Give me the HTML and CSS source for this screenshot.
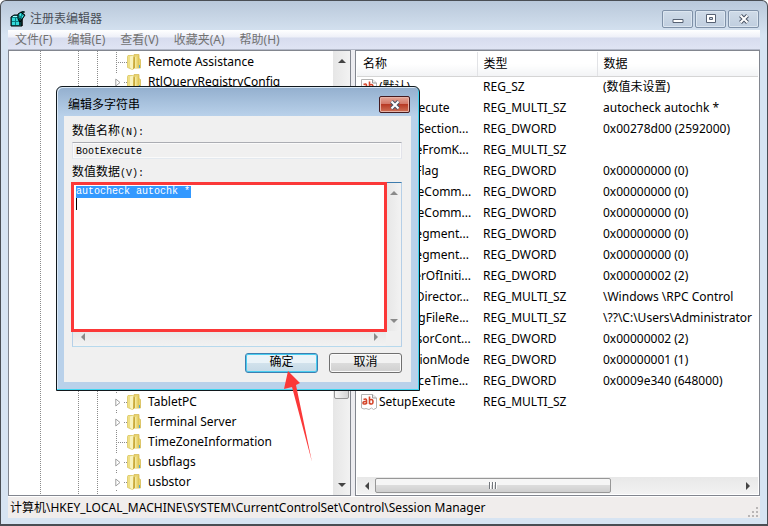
FILE: index.html
```html
<!DOCTYPE html>
<html lang="zh-CN">
<head>
<meta charset="utf-8">
<title>注册表编辑器</title>
<link rel="stylesheet" href="styles.css">
</head>
<body>
<svg class="defs" aria-hidden="true">
  <defs>
    <linearGradient id="gold" x1="0" x2="1"><stop offset="0" stop-color="#f7efa8"/><stop offset="1" stop-color="#dcc04e"/></linearGradient>
    <symbol id="folder" viewBox="0 0 14 16">
      <path d="M1 1.500h5.500v13l-1 1L.5 13.500v-11z" fill="#efdf86" stroke="#dac660" stroke-width=".8"/>
      <path d="M7 .5h5v4l1.500 1v8.500H7z" fill="#e9d370" stroke="#d5bd58" stroke-width=".8"/>
      <path d="M3 2.500l3.500-1v13L5 15.500l-2-2z" fill="#f9f3bf"/>
      <path d="M6.500 2.500l1.500 1v10l-2 2z" fill="#c9a93b"/>
      <path d="M8 3l4-1.500v12l-4 1z" fill="url(#gold)"/>
      <path d="M12.500 11v3" stroke="#58aacb"/>
    </symbol>
    <symbol id="twist" viewBox="0 0 6 9"><path d="M.8 1v7L5 4.500z" fill="#fff" stroke="#a0a0a0"/></symbol>
    <symbol id="string" viewBox="0 0 16 16">
      <path d="M.5.5h11l4 3.500v10l-3 1.500-2-1.500-2.500 1.500-3-1-2 .5-2.500-1z" fill="#fff" stroke="#b4b4b4"/>
      <path d="M11.500.5V4h4" fill="#eee" stroke="#999"/>
      <path d="M2.500 5.500q3-1.200 3 .7V10M5.500 7.500Q2 7.200 2 9t3.500.4M8.500 2.500V10M8.500 6q3.500-1.500 3.500 1.800T8.500 9.500" fill="none" stroke="#d4452a" stroke-width="1.600"/>
    </symbol>
    <symbol id="cross" viewBox="0 0 12 10"><path d="M2.500 1.500l7 7M9.500 1.500l-7 7" stroke="#4b5566" stroke-width="4"/><path d="M2.500 1.500l7 7M9.500 1.500l-7 7" stroke="#fff" stroke-width="2"/></symbol>
    <symbol id="left" viewBox="0 0 6 8"><path d="M5 0v8L1 4z" fill="currentColor"/></symbol>
    <symbol id="right" viewBox="0 0 6 8"><path d="M1 0v8l4-4z" fill="currentColor"/></symbol>
    <symbol id="up" viewBox="0 0 8 6"><path d="M0 5h8L4 1z" fill="currentColor"/></symbol>
    <symbol id="down" viewBox="0 0 8 6"><path d="M0 1h8L4 5z" fill="currentColor"/></symbol>
  </defs>
</svg>
<div class="window">
  <header class="titlebar">
    <svg class="app-icon" viewBox="0 0 16 16">
      <path d="M1 6l3-2h7l1 3v8H1z" fill="#087c80" stroke="#000"/>
      <path d="M2 7h3v3H2zM6 7h2v3H6zM2 11h3v3H2zM6 11h3v3H6z" fill="#32dada"/>
      <path d="M3 5h5l-1 1H3z" fill="#a7ffff"/>
      <path d="M8 3l3-2 2 2 2 1-2 3-3 4-2-3z" fill="#0a8b8f" stroke="#000"/>
      <path d="M9 4l2-2v3zM12 5l2-1-2 3z" fill="#51f5f5"/>
      <path d="M12 0h2v2h-2zM12 8v7M10 7v7" stroke="#000" fill="#24cccc"/>
    </svg>
    <h1>注册表编辑器</h1>
    <div class="caption-buttons">
      <button aria-label="最小化"><svg viewBox="0 0 12 10"><path d="M1 5.500h10v3H1z" fill="#fff" stroke="#566173"/></svg></button>
      <button aria-label="最大化"><svg viewBox="0 0 12 10"><path d="M1.500.5h9v8h-9z" fill="#fff" stroke="#566173"/><path d="M4.500 3.500h3v2h-3z" fill="#cbd6e4" stroke="#566173"/></svg></button>
      <button aria-label="关闭"><svg><use href="#cross"/></svg></button>
    </div>
  </header>
  <nav class="menu">
    <button>文件(F)</button><button>编辑(E)</button><button>查看(V)</button><button>收藏夹(A)</button><button>帮助(H)</button>
  </nav>
  <main class="panes">
    <section class="pane tree-pane">
      <ul class="tree">
        <li class="leaf"><svg class="folder"><use href="#folder"/></svg>Remote Assistance</li>
        <li><svg class="twist"><use href="#twist"/></svg><svg class="folder"><use href="#folder"/></svg>RtlQueryRegistryConfig</li>
        <li class="covered"></li>
        <li><svg class="twist"><use href="#twist"/></svg><svg class="folder"><use href="#folder"/></svg>TabletPC</li>
        <li><svg class="twist"><use href="#twist"/></svg><svg class="folder"><use href="#folder"/></svg>Terminal Server</li>
        <li class="leaf"><svg class="folder"><use href="#folder"/></svg>TimeZoneInformation</li>
        <li><svg class="twist"><use href="#twist"/></svg><svg class="folder"><use href="#folder"/></svg>usbflags</li>
        <li><svg class="twist"><use href="#twist"/></svg><svg class="folder"><use href="#folder"/></svg>usbstor</li>
      </ul>
      <div class="vscroll tree-scroll"><svg class="arrow-v"><use href="#up"/></svg><div class="vthumb"></div><svg class="arrow-v end"><use href="#down"/></svg></div>
    </section>
    <section class="pane list-pane">
      <div class="list">
      <table>
        <thead><tr><th class="col">名称</th><th class="col">类型</th><th>数据</th></tr></thead>
        <tbody>
          <tr><td><svg><use href="#string"/></svg>(默认)</td><td>REG_SZ</td><td>(数值未设置)</td></tr>
          <tr><td class="plain">BootExecute</td><td>REG_MULTI_SZ</td><td>autocheck autochk *</td></tr>
          <tr><td class="plain">CriticalSection...</td><td>REG_DWORD</td><td>0x00278d00 (2592000)</td></tr>
          <tr><td class="plain">ExcludeFromK...</td><td>REG_MULTI_SZ</td><td></td></tr>
          <tr><td class="plain">GlobalFlag</td><td>REG_DWORD</td><td>0x00000000 (0)</td></tr>
          <tr><td class="plain">HeapDeComm...</td><td>REG_DWORD</td><td>0x00000000 (0)</td></tr>
          <tr><td class="plain">HeapDeComm...</td><td>REG_DWORD</td><td>0x00000000 (0)</td></tr>
          <tr><td class="plain">HeapSegment...</td><td>REG_DWORD</td><td>0x00000000 (0)</td></tr>
          <tr><td class="plain">HeapSegment...</td><td>REG_DWORD</td><td>0x00000000 (0)</td></tr>
          <tr><td class="plain">NumberOfIniti...</td><td>REG_DWORD</td><td>0x00000002 (2)</td></tr>
          <tr><td class="plain">ObjectDirector...</td><td>REG_MULTI_SZ</td><td>\Windows \RPC Control</td></tr>
          <tr><td class="plain">PendingFileRe...</td><td>REG_MULTI_SZ</td><td>\??\C:\Users\Administrator</td></tr>
          <tr><td class="plain">ProcessorCont...</td><td>REG_DWORD</td><td>0x00000002 (2)</td></tr>
          <tr><td class="plain">ProtectionMode</td><td>REG_DWORD</td><td>0x00000001 (1)</td></tr>
          <tr><td class="plain">ResourceTime...</td><td>REG_DWORD</td><td>0x0009e340 (648000)</td></tr>
          <tr><td><svg><use href="#string"/></svg>SetupExecute</td><td>REG_MULTI_SZ</td><td></td></tr>
        </tbody>
      </table>
      </div>
      <div class="hscroll"><svg class="arrow-h"><use href="#left"/></svg><div class="hthumb"><i></i><i></i><i></i></div><svg class="arrow-h end"><use href="#right"/></svg></div>
    </section>
  </main>
  <footer class="status">计算机\HKEY_LOCAL_MACHINE\SYSTEM\CurrentControlSet\Control\Session Manager
    <svg class="grip" viewBox="0 0 10 10"><path d="M8 0h2v2H8zM4 4h2v2H4zM8 4h2v2H8zM0 8h2v2H0zM4 8h2v2H4zM8 8h2v2H8z" fill="#b9b6b6"/></svg>
  </footer>
</div>

<div class="dialog" role="dialog" aria-labelledby="dialog-title">
  <div class="dialog-title"><h2 id="dialog-title">编辑多字符串</h2><button class="dialog-close" aria-label="关闭"><svg><use href="#cross"/></svg></button></div>
  <form class="dialog-body">
    <label for="value-name">数值名称<span class="mono">(N):</span></label>
    <input id="value-name" value="BootExecute" readonly>
    <label for="value-data">数值数据<span class="mono">(V):</span></label>
    <div class="editor">
      <textarea id="value-data" spellcheck="false">autocheck autochk *
</textarea>
      <div class="vscroll pale"><svg class="arrow-v"><use href="#up"/></svg><svg class="arrow-v end"><use href="#down"/></svg></div>
      <div class="hscroll pale"><svg class="arrow-h"><use href="#left"/></svg><svg class="arrow-h end"><use href="#right"/></svg></div>
      <div class="highlight"></div>
    </div>
    <div class="actions"><button type="button" class="default">确定</button><button type="button">取消</button></div>
  </form>
  <svg class="pointer" viewBox="0 0 30 92"><path d="M5 0L17 12l-4 2L29 91 9 16l-8 2z" fill="#fb3838"/></svg>
</div>
</body>
</html>
```
FILE: styles.css
```css
* { box-sizing: border-box; }
body {
  margin: 0;
  overflow: hidden;
  background: #fff;
  color: #000;
  font: 12px/20px "Noto Sans", "Noto Sans CJK SC", sans-serif;
}
button, input, textarea { font: inherit; margin: 0; padding: 0; }
h1, h2 { margin: 0; font-size: 12px; font-weight: 400; }
svg { display: block; flex: none; }
.defs { position: absolute; width: 0; height: 0; }

.window {
  display: flex;
  flex-direction: column;
  height: 100vh;
  padding: 0 7px 6px;
  border: 1px solid #4a4e54;
  border-bottom-width: 2px;
  border-radius: 6px 6px 0 0;
  background: linear-gradient(#b9c8da, #d7e4f2 34px, #d7e4f2);
}
.titlebar { display: flex; align-items: center; height: 29px; padding: 6px 1px 0 2px; }
.app-icon { width: 16px; height: 16px; }
.titlebar h1 { margin-left: 4px; flex: 1; color: #4a4f57; }
.caption-buttons { display: flex; gap: 2px; }
.caption-buttons button {
  display: grid;
  place-items: center;
  width: 31px;
  height: 18px;
  border: 1px solid #7f91a8;
  border-radius: 2px;
  background: linear-gradient(#cfdbe8, #c0cedf);
  box-shadow: inset 0 0 0 1px #dce6f0;
}
.caption-buttons svg, .dialog-close svg { width: 12px; height: 10px; }

.menu {
  display: flex;
  gap: 15px;
  height: 20px;
  padding-left: 7px;
  border-bottom: 1px solid #b3b9c9;
  background: linear-gradient(#fff, #eef0f8 7px, #d7dcee 8px, #dfe4f4);
}
.menu button { border: 0; background: none; color: #727272; }

.panes { display: flex; flex: 1; gap: 4px; min-height: 0; background: #ececf0; }
.pane { border: 1px solid #82868f; background: #fff; }
.tree-pane { display: flex; width: 343px; }
.tree {
  flex: 1;
  margin: 0;
  padding: 1px 0 0 107px;
  list-style: none;
  background:
    repeating-linear-gradient(#8b8b8b 0 1px, transparent 1px 2px) 31px 0 / 1px 100% no-repeat,
    repeating-linear-gradient(#8b8b8b 0 1px, transparent 1px 2px) 69px 0 / 1px 100% no-repeat,
    repeating-linear-gradient(#8b8b8b 0 1px, transparent 1px 2px) 88px 0 / 1px 100% no-repeat;
}
.tree li {
  display: flex;
  align-items: center;
  height: 20px;
  background:
    repeating-linear-gradient(90deg, #8b8b8b 0 1px, transparent 1px 2px) 8px 10px / 4px 1px no-repeat,
    linear-gradient(#8b8b8b, #8b8b8b) 0 0 / 1px 1px no-repeat,
    linear-gradient(#8b8b8b, #8b8b8b) 0 18px / 1px 1px no-repeat;
}
.tree .leaf {
  padding-left: 11px;
  background:
    repeating-linear-gradient(90deg, #8b8b8b 0 1px, transparent 1px 2px) 0 10px / 12px 1px no-repeat,
    repeating-linear-gradient(#8b8b8b 0 1px, transparent 1px 2px) 0 0 / 1px 100% no-repeat;
}
.tree .covered { height: 300px; }
.twist { width: 6px; height: 9px; margin: 0 6px 0 -1px; }
.folder { width: 14px; height: 16px; margin-right: 7px; }

.vscroll { display: flex; flex-direction: column; align-items: center; background: linear-gradient(90deg, #e6e6e6, #f2f2f2); }
.arrow-v { width: 8px; height: 6px; }
.arrow-v.end { margin-top: auto; }
.tree-scroll { width: 17px; padding: 7px 0; color: #444; }
.vthumb { width: 15px; height: 100px; margin-top: 235px; border: 1px solid #979797; border-radius: 2px; background: linear-gradient(90deg, #f5f5f5, #d5d5d5); }

.list-pane { display: flex; flex: 1; flex-direction: column; min-width: 0; padding: 1px; }
.list { flex: 1; min-height: 0; overflow: hidden; }
table { width: 100%; table-layout: fixed; border-collapse: collapse; }
th { height: 24px; padding: 0 6px; border-bottom: 1px solid #d5d5d5; background: linear-gradient(#fff 50%, #f2f3f5); font-weight: 400; text-align: left; }
.col { width: 120px; border-right: 1px solid #e2e3e6; }
td { height: 21px; padding: 0 0 0 6px; white-space: nowrap; }
td svg { float: left; width: 16px; height: 16px; margin: 2px 2px 0 -2px; }
td.plain { padding-left: 22px; }
.hscroll { display: flex; align-items: center; height: 17px; padding: 0 7px; color: #444; background: linear-gradient(#e8e8e8, #f2f2f2); }
.arrow-h { width: 6px; height: 8px; }
.arrow-h.end { margin-left: auto; }
.hthumb {
  display: flex;
  align-items: center;
  justify-content: center;
  gap: 1px;
  width: 61%;
  height: 15px;
  margin-left: 5px;
  border: 1px solid #979797;
  border-radius: 2px;
  background: linear-gradient(#f5f5f5 45%, #dcdcdc 50%, #cfcfcf);
}
.hthumb i { width: 2px; height: 7px; background: #73777c; border-right: 1px solid #fff; }

.status { display: flex; align-items: center; justify-content: space-between; height: 22px; padding: 0 2px; border-top: 1px solid #fff; background: #f0edec; white-space: nowrap; }
.grip { width: 10px; height: 10px; align-self: flex-end; margin-bottom: 1px; }

.dialog {
  position: absolute;
  left: 56px;
  top: 86px;
  width: 364px;
  padding: 0 8px 8px 7px;
  border: 1px solid #10181d;
  border-radius: 6px 6px 0 0;
  background: linear-gradient(#93afce, #b9d1ea 29px, #b9d1ea);
  box-shadow: inset -1px -1px #3fd5f0, inset 1px 1px #dbe9f6;
}
.dialog-title { display: flex; justify-content: space-between; height: 29px; padding: 9px 1px 0 4px; }
.dialog-title h2 { line-height: 18px; }
.dialog-close {
  display: grid;
  place-items: center;
  width: 31px;
  height: 17px;
  border: 1px solid #451b1f;
  border-radius: 2px;
  background: linear-gradient(#e5a798, #d37868 45%, #b83b25 50%, #cf7157);
  box-shadow: inset 0 0 0 1px #e7b3a7;
}
.dialog-body { display: flex; flex-direction: column; padding: 6px 9px 9px 8px; background: #f0f0f0; font-family: "Liberation Mono", "Noto Sans CJK SC", monospace; }
.dialog-body label { height: 20px; }
.mono { font-size: 10px; }
.dialog-body input {
  height: 17px;
  margin: 0 0 4px;
  padding: 2px 3px 0;
  border: 1px solid;
  border-color: #abadb3 #e2e3ea #e3e9ef;
  background: #f0f0f0;
  box-shadow: inset 0 0 0 1px #fafafa;
  font-size: 10px;
}
.editor {
  position: relative;
  display: grid;
  grid-template: 148px 15px / 1fr 15px;
  margin-top: -1px;
  border: 1px solid;
  border-color: #3d7bad #b5cfe7 #b7d9ed;
  background: #f0f0f0;
}
.editor textarea {
  display: block;
  width: 100%;
  height: 100%;
  padding: 3px 3px 0;
  border: 0;
  outline: 0;
  resize: none;
  overflow: hidden;
  color: #fff;
  font-size: 10px;
  line-height: 12px;
  background:
    linear-gradient(#39f, #39f) 3px 3px / 115px 12px no-repeat,
    linear-gradient(#000, #000) 3px 15px / 1px 12px no-repeat,
    #fff;
}
.pale { color: #8a8a8a; }
.vscroll.pale { padding: 7px 0; }
.hscroll.pale { height: 15px; padding-bottom: 4px; }
.highlight { position: absolute; inset: -1px 14px 14px -2px; border: 3px solid #fb3838; }
.actions { display: flex; justify-content: flex-end; gap: 11px; margin-top: 6px; }
.actions button {
  width: 73px;
  height: 20px;
  border: 1px solid #707070;
  border-radius: 3px;
  background: linear-gradient(#f2f2f2 50%, #dcdcdc 50%, #cfcfcf);
  box-shadow: inset 0 0 0 1px #fafafa;
  line-height: 18px;
}
.actions .default { border-color: #3c7fb1; box-shadow: inset 0 0 0 1px #49cdf0; background: linear-gradient(#eaf3f8 50%, #d2e2ec 50%, #c5d9e6); }
.pointer { position: absolute; left: 226px; top: 284px; width: 30px; height: 92px; }
```
